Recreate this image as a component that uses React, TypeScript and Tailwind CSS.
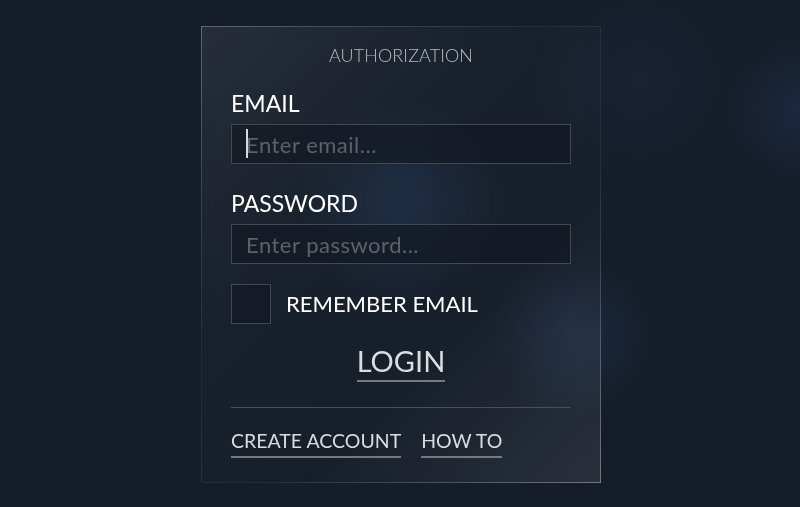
import React from "react";

const font = { fontFamily: "Lato, 'Noto Sans', sans-serif" };

const App: React.FC = () => {
  return (
    <div
      className="w-[800px] h-[507px] overflow-hidden flex justify-center pl-[2px] bg-[#151d29] bg-[radial-gradient(circle_at_400px_200px,rgba(36,58,92,0.5),rgba(36,58,92,0)_100px),radial-gradient(circle_at_575px_335px,rgba(32,52,84,0.55),rgba(32,52,84,0)_80px),radial-gradient(circle_at_800px_110px,rgba(32,50,80,0.55),rgba(32,50,80,0)_75px),radial-gradient(circle_at_640px_80px,rgba(28,42,64,0.4),rgba(28,42,64,0)_110px)]"
      style={font}
    >
      <div className="mt-[26px] w-[400px] h-[457px] flex flex-col px-[29px] border border-solid [border-image:linear-gradient(135deg,rgba(255,255,255,0.32),rgba(255,255,255,0)_40%,rgba(255,255,255,0)_60%,rgba(255,255,255,0.4))_1] bg-[linear-gradient(135deg,rgba(255,255,255,0.08),rgba(255,255,255,0.02)_35%,rgba(255,255,255,0.01)_65%,rgba(255,255,255,0.09))] backdrop-blur-sm">
        <h1 className="mt-[16px] text-center text-[18px] leading-[24px] font-light text-[#b9bcc0] tracking-[0.1px]">
          AUTHORIZATION
        </h1>

        <label className="mt-[21px] text-[23px] leading-[30px] text-white">EMAIL</label>
        <div className="relative mt-[6px]">
          <input
            type="text"
            placeholder="Enter email..."
            className="w-full h-[40px] px-[14px] bg-[#121821]/60 border border-[#43484e] text-[22px] tracking-[0.5px] text-[#ddd] placeholder:text-[#5e6266] outline-none"
            style={font}
          />
          <span className="absolute left-[15px] top-[5px] w-[2px] h-[29px] bg-[#d8d8d8]" />
        </div>

        <label className="mt-[24px] text-[23px] leading-[30px] text-white">PASSWORD</label>
        <input
          type="password"
          placeholder="Enter password..."
          className="mt-[6px] w-full h-[40px] px-[14px] bg-[#121821]/60 border border-[#43484e] text-[22px] tracking-[0.5px] text-[#ddd] placeholder:text-[#5e6266] outline-none"
          style={font}
        />

        <div className="mt-[20px] flex items-center gap-[15px]">
          <div className="w-[40px] h-[40px] border border-[#43484e] bg-[#121821]/60" />
          <span className="text-[22px] leading-[30px] text-white">REMEMBER EMAIL</span>
        </div>

        <div className="mt-[20px] flex justify-center">
          <button className="text-[29px] leading-[34px] text-[#dcdcdc] border-b-2 border-[#76787b] pb-[2px]">
            LOGIN
          </button>
        </div>

        <div className="mt-[25px] h-px bg-[#4a4f55]" />

        <div className="mt-[21px] flex gap-[20px]">
          <a className="text-[19.5px] leading-[24px] text-[#dcdcdc] border-b-2 border-[#76787b] pb-[3px]">
            CREATE ACCOUNT
          </a>
          <a className="text-[19.5px] leading-[24px] text-[#dcdcdc] border-b-2 border-[#76787b] pb-[3px]">
            HOW TO
          </a>
        </div>
      </div>
    </div>
  );
};

export default App;
